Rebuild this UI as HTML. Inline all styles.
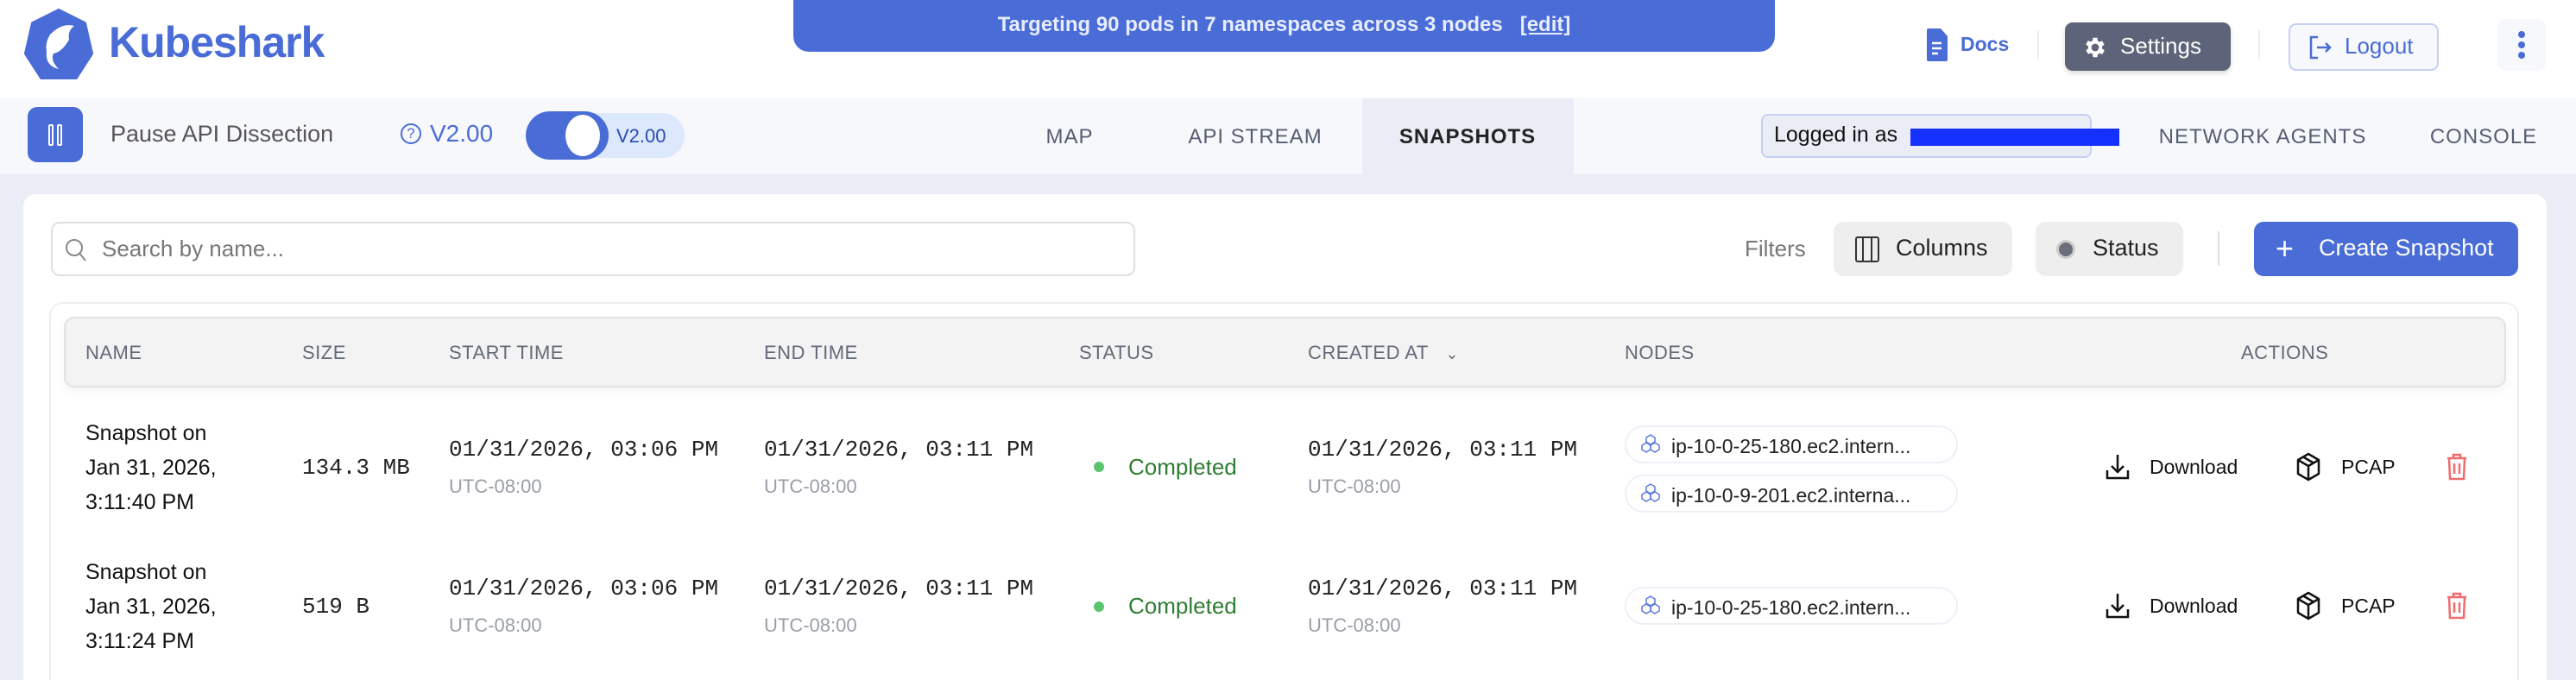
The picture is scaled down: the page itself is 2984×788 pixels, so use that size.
<!DOCTYPE html>
<html style="overflow:hidden;height:788px"><head><meta charset="utf-8"><style>
*{box-sizing:border-box;margin:0;padding:0}
body{width:2984px;height:788px;overflow:hidden;background:#eaedf5;font-family:"Liberation Sans",sans-serif;position:relative;color:#222}
.a{position:absolute}
.top{left:0;top:0;width:2984px;height:113px;background:#fff}
.bar{left:0;top:113px;width:2984px;height:89px;background:#f7f8fc}
.tab{font-size:24px;letter-spacing:1px;color:#555e70;top:145px;transform:translateX(-50%);white-space:nowrap}
.card{left:27px;top:225px;width:2923px;height:600px;background:#fff;border-radius:14px}
.hd{font-size:22px;color:#636a78;top:396px;letter-spacing:.5px}
.mono{font-family:"Liberation Mono",monospace;font-size:26px;color:#222}
.utc{font-size:22px;color:#9a9ea8}
.name{font-size:25px;line-height:40px;color:#111}
.pill{left:1882px;width:386px;height:44px;border:2px solid #eef0f8;border-radius:22px;font-size:23px;color:#222;padding:9px 0 0 52px;white-space:nowrap}
.pill svg{position:absolute;left:16px;top:8px}
.act{font-size:23px;color:#111}
</style></head><body>
<div class="a top"></div>
<svg class="a" style="left:28px;top:10px" width="80" height="82" viewBox="0 0 80 82"><path d="M40 2 L70 17 L78 52 L60 80 L20 80 L2 52 L10 17 Z" fill="#4a6cd6" stroke="#4a6cd6" stroke-width="4" stroke-linejoin="round"/><path d="M30 30 Q44 16 58 20 Q50 26 52 36 Q44 50 34 52 Q30 60 40 70 Q24 66 26 50 Q24 40 30 30Z" fill="#fff"/></svg>
<div class="a" style="left:126px;top:20px;font-size:50px;font-weight:bold;color:#4a6cd6;letter-spacing:-1px">Kubeshark</div>
<div class="a" style="left:919px;top:0;width:1137px;height:60px;background:#4a6cd6;border-radius:0 0 18px 18px;color:#e8ecff;font-weight:bold;font-size:24px;text-align:center;line-height:58px">Targeting 90 pods in 7 namespaces across 3 nodes &nbsp;&nbsp;<span style="text-decoration:underline">[edit]</span></div>
<svg class="a" style="left:2232px;top:33px" width="24" height="38" viewBox="0 0 24 38"><path d="M2 0H16L24 9V36Q24 38 22 38H2Q0 38 0 36V2Q0 0 2 0Z" fill="#4a6cd6"/><path d="M6 17H17M6 23H17M6 29H13" stroke="#fff" stroke-width="2.5"/></svg>
<div class="a" style="left:2271px;top:38px;font-size:23px;font-weight:bold;color:#4a6cd6">Docs</div>
<div class="a" style="left:2360px;top:35px;width:2px;height:34px;background:#eceef2"></div>
<div class="a" style="left:2392px;top:26px;width:192px;height:56px;background:#5d6479;border-radius:9px;box-shadow:0 3px 6px rgba(0,0,0,.15)"></div>
<svg class="a" style="left:2412px;top:40px" width="30" height="30" viewBox="0 0 24 24"><path fill="#fff" d="M19.4 13a7.5 7.5 0 0 0 0-2l2.1-1.6-2-3.5-2.5 1a7 7 0 0 0-1.7-1L15 3h-4l-.4 2.7a7 7 0 0 0-1.7 1l-2.5-1-2 3.5L6.6 11a7.5 7.5 0 0 0 0 2l-2.1 1.6 2 3.5 2.5-1a7 7 0 0 0 1.7 1L11 21h4l.4-2.7a7 7 0 0 0 1.7-1l2.5 1 2-3.5zM13 15.5a3.5 3.5 0 1 1 0-7 3.5 3.5 0 0 1 0 7z" transform="translate(-1 0)"/></svg>
<div class="a" style="left:2456px;top:38px;font-size:26px;color:#fff">Settings</div>
<div class="a" style="left:2616px;top:35px;width:2px;height:34px;background:#eceef2"></div>
<div class="a" style="left:2651px;top:27px;width:174px;height:55px;background:#f7f8fc;border:2px solid #c5d0f5;border-radius:9px"></div>
<svg class="a" style="left:2673px;top:40px" width="30" height="30" viewBox="0 0 30 30"><path d="M12 3H4V27H12M11 15H26M21 10L26 15L21 20" fill="none" stroke="#4a6cd6" stroke-width="2.5"/></svg>
<div class="a" style="left:2716px;top:38px;font-size:26px;color:#4a6cd6">Logout</div>
<div class="a" style="left:2893px;top:22px;width:56px;height:60px;background:#f7f8fc;border-radius:10px"></div>
<div class="a" style="left:2917px;top:36px;width:8px;height:8px;border-radius:4px;background:#4a6cd6;box-shadow:0 12px 0 #4a6cd6,0 24px 0 #4a6cd6"></div>

<div class="a bar"></div>
<div class="a" style="left:32px;top:124px;width:64px;height:64px;background:#4a6cd6;border-radius:11px"></div>
<div class="a" style="left:56px;top:144px;width:6px;height:25px;border:2px solid #fff;border-radius:2px"></div>
<div class="a" style="left:66px;top:144px;width:6px;height:25px;border:2px solid #fff;border-radius:2px"></div>
<div class="a" style="left:128px;top:140px;font-size:27px;color:#555">Pause API Dissection</div>
<div class="a" style="left:464px;top:143px;width:24px;height:24px;border:2px solid #4a6cd6;border-radius:50%;font-size:17px;color:#4a6cd6;text-align:center;line-height:20px">?</div>
<div class="a" style="left:498px;top:139px;font-size:28px;color:#4a6cd6">V2.00</div>
<div class="a" style="left:650px;top:131px;width:143px;height:52px;background:#dce8fb;border-radius:26px"></div>
<div class="a" style="left:609px;top:129px;width:96px;height:56px;background:#4a6cd6;border-radius:28px"></div>
<div class="a" style="left:655px;top:133px;width:40px;height:48px;background:#fff;border-radius:50%"></div>
<div class="a" style="left:714px;top:145px;font-size:22px;color:#2a4bb5">V2.00</div>
<div class="a tab" style="left:1239px">MAP</div>
<div class="a tab" style="left:1454px">API STREAM</div>
<div class="a" style="left:1578px;top:114px;width:245px;height:88px;background:#eaedf5"></div>
<div class="a tab" style="left:1700px;font-weight:bold;color:#222">SNAPSHOTS</div>
<div class="a" style="left:2040px;top:132px;width:383px;height:51px;background:#eaedf5;border:2px solid #c5d0f5;border-radius:8px"></div>
<div class="a" style="left:2055px;top:142px;font-size:25px;color:#111">Logged in as</div>
<div class="a" style="left:2213px;top:149px;width:242px;height:20px;background:#1531ff"></div>
<div class="a tab" style="left:2621px">NETWORK AGENTS</div>
<div class="a tab" style="left:2877px">CONSOLE</div>

<div class="a card"></div>
<div class="a" style="left:59px;top:257px;width:1256px;height:63px;border:2px solid #e0e0e0;border-radius:10px"></div>
<svg class="a" style="left:74px;top:275px" width="28" height="30" viewBox="0 0 28 30"><circle cx="12" cy="12" r="9" fill="none" stroke="#888" stroke-width="2"/><path d="M18.5 19L25 27" stroke="#888" stroke-width="2"/></svg>
<div class="a" style="left:118px;top:273px;font-size:26px;color:#777">Search by name...</div>
<div class="a" style="left:2021px;top:273px;font-size:26px;color:#777">Filters</div>
<div class="a" style="left:2124px;top:257px;width:207px;height:63px;background:#eee;border-radius:12px"></div>
<div class="a" style="left:2149px;top:274px;width:28px;height:30px;border:2.5px solid #333;border-radius:3px"></div>
<div class="a" style="left:2157px;top:274px;width:12px;height:30px;border-left:2.5px solid #333;border-right:2.5px solid #333"></div>
<div class="a" style="left:2196px;top:272px;font-size:27px;color:#222">Columns</div>
<div class="a" style="left:2358px;top:257px;width:171px;height:63px;background:#eee;border-radius:12px"></div>
<div class="a" style="left:2382px;top:278px;width:22px;height:22px;border-radius:50%;background:#6b6e78;border:3px solid #ccc"></div>
<div class="a" style="left:2424px;top:272px;font-size:27px;color:#222">Status</div>
<div class="a" style="left:2569px;top:268px;width:2px;height:40px;background:#e0e0e0"></div>
<div class="a" style="left:2611px;top:257px;width:306px;height:63px;background:#4a6cd6;border-radius:11px"></div>
<div class="a" style="left:2636px;top:267px;font-size:36px;color:#fff;font-weight:300">+</div>
<div class="a" style="left:2686px;top:272px;font-size:27px;color:#fff">Create Snapshot</div>

<div class="a" style="left:57px;top:350px;width:2861px;height:460px;border:2px solid #eee;border-radius:16px"></div>
<div class="a" style="left:74px;top:367px;width:2829px;height:82px;background:#f3f3f3;border:2px solid #e2e2e2;border-radius:12px;box-shadow:0 6px 12px rgba(0,0,0,.04)"></div>
<div class="a hd" style="left:99px">NAME</div>
<div class="a hd" style="left:350px">SIZE</div>
<div class="a hd" style="left:520px">START TIME</div>
<div class="a hd" style="left:885px">END TIME</div>
<div class="a hd" style="left:1250px">STATUS</div>
<div class="a hd" style="left:1515px">CREATED AT &nbsp;&nbsp;<span style="font-size:18px">&#8964;</span></div>
<div class="a hd" style="left:1882px">NODES</div>
<div class="a hd" style="left:2596px">ACTIONS</div>

<div class="a name" style="left:99px;top:482px">Snapshot on<br>Jan 31, 2026,<br>3:11:40 PM</div>
<div class="a mono" style="left:350px;top:527px">134.3 MB</div>
<div class="a mono" style="left:520px;top:506px">01/31/2026, 03:06 PM</div>
<div class="a utc" style="left:520px;top:551px">UTC-08:00</div>
<div class="a mono" style="left:885px;top:506px">01/31/2026, 03:11 PM</div>
<div class="a utc" style="left:885px;top:551px">UTC-08:00</div>
<div class="a" style="left:1267px;top:535px;width:12px;height:12px;border-radius:6px;background:#5cc46e"></div>
<div class="a" style="left:1307px;top:526px;font-size:26px;color:#2e7d32">Completed</div>
<div class="a mono" style="left:1515px;top:506px">01/31/2026, 03:11 PM</div>
<div class="a utc" style="left:1515px;top:551px">UTC-08:00</div>
<div class="a pill" style="top:493px"><svg width="24" height="26" viewBox="0 0 24 26"><g fill="none" stroke="#5a78d8" stroke-width="1.5"><path d="M12 1l5 3v5l-5 3-5-3V4z"/><path d="M7 10l5 3v5l-5 3-5-3v-5z"/><path d="M17 10l5 3v5l-5 3-5-3v-5z"/></g></svg>ip-10-0-25-180.ec2.intern...</div>
<div class="a pill" style="top:550px"><svg width="24" height="26" viewBox="0 0 24 26"><g fill="none" stroke="#5a78d8" stroke-width="1.5"><path d="M12 1l5 3v5l-5 3-5-3V4z"/><path d="M7 10l5 3v5l-5 3-5-3v-5z"/><path d="M17 10l5 3v5l-5 3-5-3v-5z"/></g></svg>ip-10-0-9-201.ec2.interna...</div>

<div class="a name" style="left:99px;top:643px">Snapshot on<br>Jan 31, 2026,<br>3:11:24 PM</div>
<div class="a mono" style="left:350px;top:688px">519 B</div>
<div class="a mono" style="left:520px;top:667px">01/31/2026, 03:06 PM</div>
<div class="a utc" style="left:520px;top:712px">UTC-08:00</div>
<div class="a mono" style="left:885px;top:667px">01/31/2026, 03:11 PM</div>
<div class="a utc" style="left:885px;top:712px">UTC-08:00</div>
<div class="a" style="left:1267px;top:697px;width:12px;height:12px;border-radius:6px;background:#5cc46e"></div>
<div class="a" style="left:1307px;top:687px;font-size:26px;color:#2e7d32">Completed</div>
<div class="a mono" style="left:1515px;top:667px">01/31/2026, 03:11 PM</div>
<div class="a utc" style="left:1515px;top:712px">UTC-08:00</div>
<div class="a pill" style="top:680px"><svg width="24" height="26" viewBox="0 0 24 26"><g fill="none" stroke="#5a78d8" stroke-width="1.5"><path d="M12 1l5 3v5l-5 3-5-3V4z"/><path d="M7 10l5 3v5l-5 3-5-3v-5z"/><path d="M17 10l5 3v5l-5 3-5-3v-5z"/></g></svg>ip-10-0-25-180.ec2.intern...</div>

<svg class="a" style="left:2438px;top:525px" width="30" height="32" viewBox="0 0 30 32"><path d="M15 2V22M8 15L15 22L22 15M3 20V29H27V20" fill="none" stroke="#111" stroke-width="2.5"/></svg>
<div class="a act" style="left:2490px;top:528px">Download</div>
<svg class="a" style="left:2660px;top:524px" width="28" height="34" viewBox="0 0 28 34"><path d="M14 2L26 9V25L14 32L2 25V9Z M2 9L14 16L26 9 M14 16V32 M8 5.5L20 12.5" fill="none" stroke="#111" stroke-width="2.5" stroke-linejoin="round"/></svg>
<div class="a act" style="left:2712px;top:528px">PCAP</div>
<svg class="a" style="left:2832px;top:524px" width="28" height="34" viewBox="0 0 28 34"><path d="M3 7H25M10 7V3H18V7M5 7L6 31H22L23 7M11 13V25M17 13V25" fill="none" stroke="#f06b6b" stroke-width="2.5"/></svg>
<svg class="a" style="left:2438px;top:686px" width="30" height="32" viewBox="0 0 30 32"><path d="M15 2V22M8 15L15 22L22 15M3 20V29H27V20" fill="none" stroke="#111" stroke-width="2.5"/></svg>
<div class="a act" style="left:2490px;top:689px">Download</div>
<svg class="a" style="left:2660px;top:685px" width="28" height="34" viewBox="0 0 28 34"><path d="M14 2L26 9V25L14 32L2 25V9Z M2 9L14 16L26 9 M14 16V32 M8 5.5L20 12.5" fill="none" stroke="#111" stroke-width="2.5" stroke-linejoin="round"/></svg>
<div class="a act" style="left:2712px;top:689px">PCAP</div>
<svg class="a" style="left:2832px;top:685px" width="28" height="34" viewBox="0 0 28 34"><path d="M3 7H25M10 7V3H18V7M5 7L6 31H22L23 7M11 13V25M17 13V25" fill="none" stroke="#f06b6b" stroke-width="2.5"/></svg>
</body></html>
